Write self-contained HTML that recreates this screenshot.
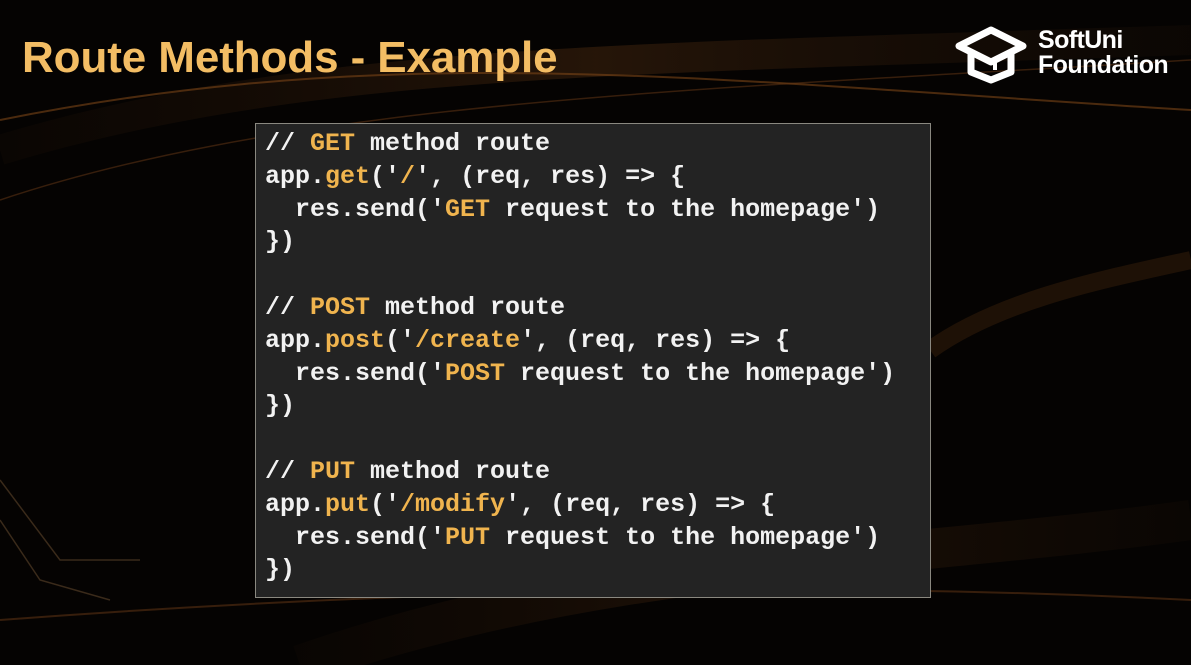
<!DOCTYPE html>
<html><head><meta charset="utf-8"><style>
html,body{margin:0;padding:0}
body{width:1191px;height:665px;background:#050302;position:relative;overflow:hidden;font-family:"Liberation Sans",sans-serif}
.bg{position:absolute;left:0;top:0}
h1{position:absolute;left:22px;top:33px;margin:0;font-size:44px;font-weight:bold;color:#f3bd64;letter-spacing:-0.1px;white-space:nowrap}
.logo{position:absolute;left:955px;top:26px}
.lt{position:absolute;left:1038px;top:28px;color:#fff;font-weight:bold;font-size:25px;line-height:25px;letter-spacing:-0.6px}
.code{position:absolute;left:255px;top:123px;width:674px;height:473px;background:#232323;border:1px solid #8a8880}
pre{margin:0;position:absolute;left:9px;top:4px;font-family:"Liberation Mono",monospace;font-weight:bold;font-size:25px;line-height:32.8px;color:#f2f2f2}
.o{color:#f0b44e}
</style></head><body>
<svg class="bg" width="1191" height="665">
<defs><linearGradient id="g" x1="0" x2="1"><stop offset="0" stop-color="#5a3010" stop-opacity="0.2"/><stop offset="0.5" stop-color="#a05a20" stop-opacity="0.7"/><stop offset="1" stop-color="#4a2a10" stop-opacity="0.3"/></linearGradient></defs>
<path d="M0 150 C300 60 600 60 1191 40" stroke="url(#g)" stroke-width="30" fill="none" opacity="0.3"/>
<path d="M0 120 C400 40 700 80 1191 110" stroke="#7a4418" stroke-width="2" fill="none" opacity="0.6"/>
<path d="M0 200 C300 100 700 90 1191 60" stroke="#6a3a15" stroke-width="1.5" fill="none" opacity="0.5"/>
<path d="M300 665 C600 560 900 560 1191 520" stroke="url(#g)" stroke-width="40" fill="none" opacity="0.25"/>
<path d="M0 620 C400 590 800 580 1191 600" stroke="#6a3a15" stroke-width="2" fill="none" opacity="0.5"/>
<path d="M930 350 C1000 300 1100 280 1191 260" stroke="#5a3212" stroke-width="18" fill="none" opacity="0.3"/>
<path d="M0 480 L60 560 L140 560" stroke="#3a2a1a" stroke-width="1.5" fill="none"/>
<path d="M0 520 L40 580 L110 600" stroke="#3a2a1a" stroke-width="1.5" fill="none"/>
</svg>
<h1>Route Methods - Example</h1>
<svg class="logo" width="72" height="58" viewBox="0 0 72 58">
<path d="M36 4 L68 20 L36 36 L4 20 Z" fill="none" stroke="#fff" stroke-width="7" stroke-linejoin="round"/>
<path d="M16 28 V46 L36 54 L56 46 V28" fill="none" stroke="#fff" stroke-width="7" stroke-linejoin="round"/>
<path d="M40 32 V44" stroke="#fff" stroke-width="4"/>
</svg>
<div class="lt">SoftUni<br>Foundation</div>
<div class="code"><pre>// <span class="o">GET</span> method route
app.<span class="o">get</span>('<span class="o">/</span>', (req, res) =&gt; {
  res.send('<span class="o">GET</span> request to the homepage')
})

// <span class="o">POST</span> method route
app.<span class="o">post</span>('<span class="o">/create</span>', (req, res) =&gt; {
  res.send('<span class="o">POST</span> request to the homepage')
})

// <span class="o">PUT</span> method route
app.<span class="o">put</span>('<span class="o">/modify</span>', (req, res) =&gt; {
  res.send('<span class="o">PUT</span> request to the homepage')
})</pre></div>
</body></html>
